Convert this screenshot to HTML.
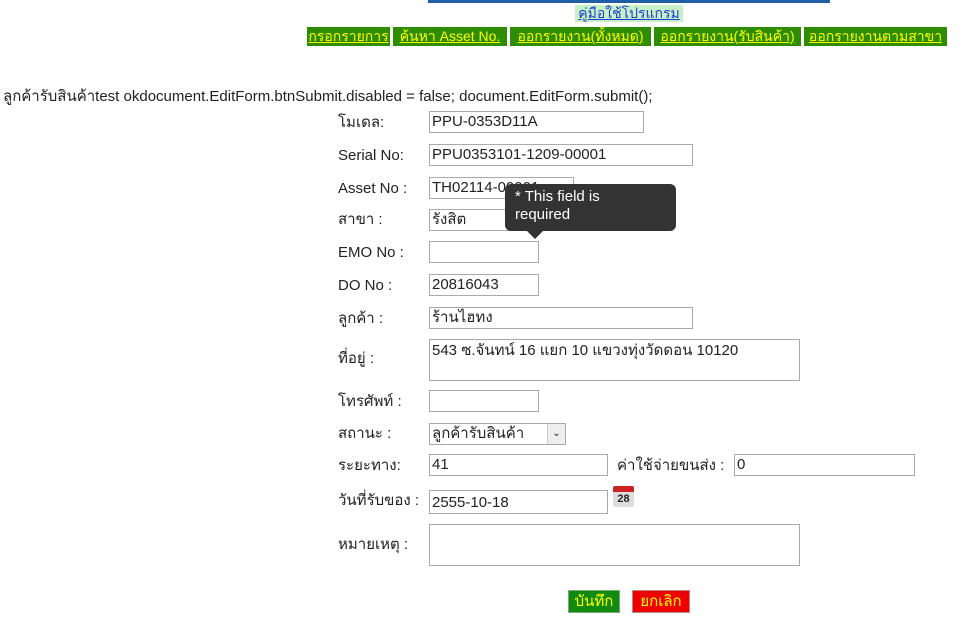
<!DOCTYPE html>
<html><head><meta charset="utf-8"><style>
body{margin:0;width:978px;height:626px;background:#fff;font-family:"Liberation Sans",Tahoma,sans-serif;position:relative;overflow:hidden}
.a{position:absolute}
.lb{position:absolute;left:338px;font-size:15px;color:#222;line-height:18px;height:18px}
.in{position:absolute;left:429px;height:22px;border:1px solid #aaa;box-sizing:border-box;font-size:15px;padding:0 2px;color:#222;background:#fff;line-height:20px;overflow:hidden;white-space:nowrap}
.nav{position:absolute;top:27px;height:19px;background:#2d8c00;color:#ffff00;text-decoration:underline;font-size:14px;line-height:19px;white-space:nowrap;overflow:hidden;text-align:center}
</style></head><body>
<div class="a" style="left:428px;top:0;width:402px;height:3px;background:#1f5fa8"></div>
<div class="a" style="left:575px;top:5px;width:108px;height:17px;background:#c8f0c8;color:#1a3fd0;text-decoration:underline;font-size:14px;text-align:center;line-height:17px;overflow:hidden">คู่มือใช้โปรแกรม</div>
<div class="nav" style="left:307px;width:83px">กรอกรายการ</div>
<div class="nav" style="left:393px;width:114px">ค้นหา Asset No.</div>
<div class="nav" style="left:510px;width:141px">ออกรายงาน(ทั้งหมด)</div>
<div class="nav" style="left:654px;width:147px">ออกรายงาน(รับสินค้า)</div>
<div class="nav" style="left:804px;width:143px">ออกรายงานตามสาขา</div>
<div class="a" style="left:3px;top:88px;font-size:15px;color:#222;white-space:nowrap;line-height:18px">ลูกค้ารับสินค้าtest okdocument.EditForm.btnSubmit.disabled = false; document.EditForm.submit();</div>

<div class="lb" style="top:114px">โมเดล:</div><div class="in" style="top:111px;width:215px">PPU-0353D11A</div>
<div class="lb" style="top:147px">Serial No:</div><div class="in" style="top:144px;width:264px">PPU0353101-1209-00001</div>
<div class="lb" style="top:180px">Asset No :</div><div class="in" style="top:177px;width:145px">TH02114-00001</div>
<div class="lb" style="top:211px">สาขา :</div><div class="in" style="top:209px;width:145px">รังสิต</div>
<div class="lb" style="top:244px">EMO No :</div><div class="in" style="top:241px;width:110px"></div>
<div class="lb" style="top:277px">DO No :</div><div class="in" style="top:274px;width:110px">20816043</div>
<div class="lb" style="top:310px">ลูกค้า :</div><div class="in" style="top:307px;width:264px">ร้านไฮทง</div>
<div class="lb" style="top:350px">ที่อยู่ :</div><div class="in" style="top:339px;width:371px;height:42px;padding-top:1px">543 ซ.จันทน์ 16 แยก 10 แขวงทุ่งวัดดอน 10120</div>
<div class="lb" style="top:393px">โทรศัพท์ :</div><div class="in" style="top:390px;width:110px"></div>
<div class="lb" style="top:425px">สถานะ :</div><div class="in" style="top:423px;width:137px;height:22px">ลูกค้ารับสินค้า<span class="a" style="right:0;top:0;width:17px;height:20px;background:#eee;border-left:1px solid #ccc;font-size:10px;text-align:center;line-height:20px">⌄</span></div>
<div class="lb" style="top:457px">ระยะทาง:</div><div class="in" style="top:454px;width:179px">41</div>
<div class="a" style="left:617px;top:457px;font-size:15px;color:#222;line-height:18px">ค่าใช้จ่ายขนส่ง :</div><div class="in" style="left:734px;top:454px;width:181px">0</div>
<div class="lb" style="top:492px">วันที่รับของ :</div><div class="in" style="top:490px;width:179px;height:24px;line-height:24px">2555-10-18</div>
<div class="a" style="left:613px;top:486px;width:21px;height:21px;background:#ddd;border-radius:2px;overflow:hidden"><div style="height:6px;background:#c22"></div><div style="font-size:11px;font-weight:bold;text-align:center;color:#222;line-height:14px">28</div></div>
<div class="lb" style="top:536px">หมายเหตุ :</div><div class="in" style="top:524px;width:371px;height:42px"></div>
<div class="a" style="left:568px;top:590px;width:52px;height:23px;background:#118a11;border:1px solid #7a7;box-sizing:border-box;color:#ffff00;font-size:15px;text-align:center;line-height:21px;overflow:hidden">บันทึก</div>
<div class="a" style="left:632px;top:590px;width:58px;height:23px;background:#ee0000;border:1px solid #b88;box-sizing:border-box;color:#ffff00;font-size:15px;text-align:center;line-height:21px;overflow:hidden">ยกเลิก</div>
<div class="a" style="left:505px;top:184px;width:171px;height:47px;background:#333;border-radius:6px;color:#fff;font-size:15px;line-height:18px;padding:4px 10px;box-sizing:border-box">* This field is<br>required</div>
<div class="a" style="left:527px;top:231px;width:0;height:0;border-left:8px solid transparent;border-right:8px solid transparent;border-top:8px solid #333"></div>
</body></html>
